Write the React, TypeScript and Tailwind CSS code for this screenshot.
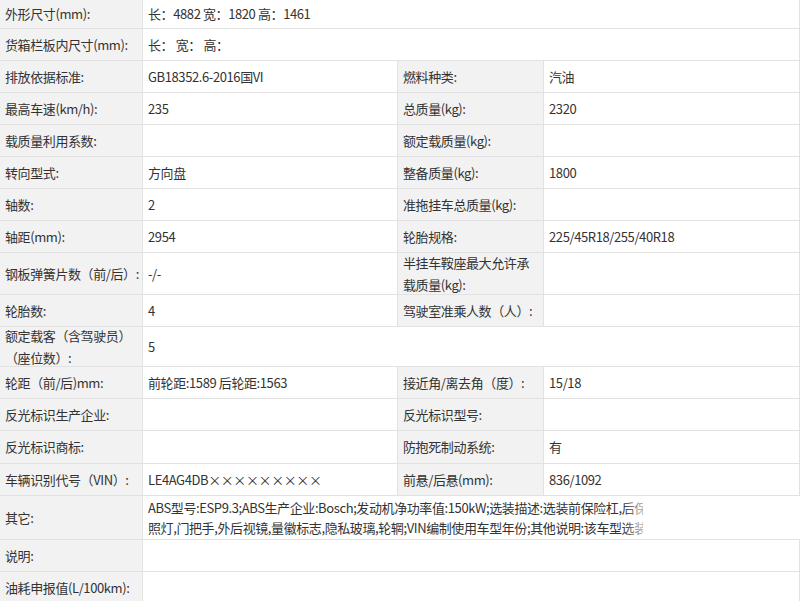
const font = { fontFamily: '"Noto Sans CJK SC", "Microsoft YaHei", sans-serif' };

type Row = { h: string; cells: [string, string] | [string, string, string, string] };

const rows: Row[] = [
  { h: "h-[29px]", cells: ["外形尺寸(mm):", "长：4882 宽：1820 高：1461"] },
  { h: "h-[32px]", cells: ["货箱栏板内尺寸(mm):", "长：  宽：  高："] },
  { h: "h-[32px]", cells: ["排放依据标准:", "GB18352.6-2016国VI", "燃料种类:", "汽油"] },
  { h: "h-[32px]", cells: ["最高车速(km/h):", "235", "总质量(kg):", "2320"] },
  { h: "h-[32px]", cells: ["载质量利用系数:", "", "额定载质量(kg):", ""] },
  { h: "h-[32px]", cells: ["转向型式:", "方向盘", "整备质量(kg):", "1800"] },
  { h: "h-[32px]", cells: ["轴数:", "2", "准拖挂车总质量(kg):", ""] },
  { h: "h-[32px]", cells: ["轴距(mm):", "2954", "轮胎规格:", "225/45R18/255/40R18"] },
  { h: "h-[42px]", cells: ["钢板弹簧片数（前/后）:", "-/-", "半挂车鞍座最大允许承载质量(kg):", ""] },
  { h: "h-[32px]", cells: ["轮胎数:", "4", "驾驶室准乘人数（人）:", ""] },
  { h: "h-[40px]", cells: ["额定载客（含驾驶员）（座位数）:", "5"] },
  { h: "h-[32px]", cells: ["轮距（前/后)mm:", "前轮距:1589 后轮距:1563", "接近角/离去角（度）:", "15/18"] },
  { h: "h-[32px]", cells: ["反光标识生产企业:", "", "反光标识型号:", ""] },
  { h: "h-[33px]", cells: ["反光标识商标:", "", "防抱死制动系统:", "有"] },
  { h: "h-[32px]", cells: ["车辆识别代号（VIN）:", "LE4AG4DB×××××××××", "前悬/后悬(mm):", "836/1092"] },
];

const tail: Row[] = [
  { h: "h-[32px]", cells: ["说明:", ""] },
  { h: "h-[32px]", cells: ["油耗申报值(L/100km):", ""] },
];

function Label({ text, w }: { text: string; w: string }) {
  return (
    <div className={`${w} shrink-0 bg-[#f2f2f2] pl-[5px] pr-[2px] flex items-center leading-[22px] border-r border-[#e2e2e2]`}>
      {text}
    </div>
  );
}

function Value({ text, w }: { text: string; w: string }) {
  return (
    <div className={`${w} shrink-0 bg-white px-[5px] flex items-center border-r border-[#e2e2e2]`}>{text}</div>
  );
}

function TableRow({ row }: { row: Row }) {
  const c = row.cells;
  return (
    <div className={`flex ${row.h} border-b border-[#e2e2e2]`}>
      <Label text={c[0]} w="w-[143px]" />
      {c.length === 2 ? (
        <Value text={c[1]} w="flex-1" />
      ) : (
        <>
          <Value text={c[1]} w="w-[255px]" />
          <Label text={c[2]} w="w-[146px]" />
          <Value text={c[3]} w="flex-1" />
        </>
      )}
    </div>
  );
}

export default function App() {
  return (
    <div className="w-[800px] h-[601px] overflow-hidden bg-white text-[13px] tracking-[-0.4px] text-[#333]" style={font}>
      {rows.map((r, i) => (
        <TableRow key={i} row={r} />
      ))}
      <div className="flex h-[44px] border-b border-[#e2e2e2]">
        <Label text="其它:" w="w-[143px]" />
        <div className="relative flex-1 bg-white px-[5px] flex items-center overflow-hidden">
          <div className="w-[495px] h-[40px] overflow-hidden leading-[20px] whitespace-nowrap">
            <div>ABS型号:ESP9.3;ABS生产企业:Bosch;发动机净功率值:150kW;选装描述:选装前保险杠,后保险杠,前</div>
            <div>照灯,门把手,外后视镜,量徽标志,隐私玻璃,轮辋;VIN编制使用车型年份;其他说明:该车型选装ETC</div>
          </div>
          <div className="absolute left-[480px] top-0 h-full w-[30px] bg-gradient-to-r from-transparent to-white" />
        </div>
      </div>
      {tail.map((r, i) => (
        <TableRow key={i} row={r} />
      ))}
    </div>
  );
}
